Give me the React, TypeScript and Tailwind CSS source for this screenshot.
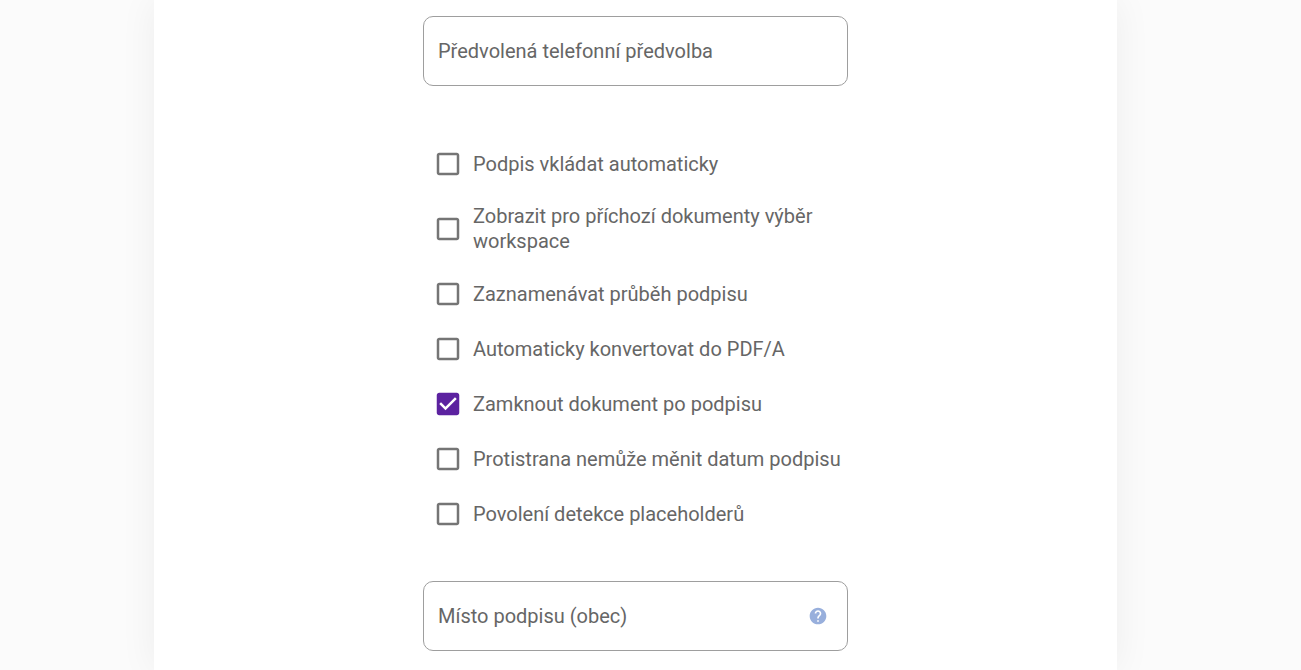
import { useId, useState } from "react";

type Option = { label: string; checked: boolean };

const options: Option[] = [
  { label: "Podpis vkládat automaticky", checked: false },
  { label: "Zobrazit pro příchozí dokumenty výběr workspace", checked: false },
  { label: "Zaznamenávat průběh podpisu", checked: false },
  { label: "Automaticky konvertovat do PDF/A", checked: false },
  { label: "Zamknout dokument po podpisu", checked: true },
  { label: "Protistrana nemůže měnit datum podpisu", checked: false },
  { label: "Povolení detekce placeholderů", checked: false },
];

// Outlined text field. The label rests inside the box while the field is empty
// and moves up onto the border once it is focused or filled.
function TextField({ label, help }: { label: string; help?: boolean }) {
  const id = useId();

  return (
    <div className="relative flex h-[70px] items-center rounded-[10px] border border-[#9e9e9e] pr-[19px] pl-3.5">
      <input
        id={id}
        type="text"
        placeholder=" "
        className="peer h-full min-w-0 flex-1 bg-transparent text-xl text-[#666666] outline-none"
      />
      <label
        htmlFor={id}
        className="pointer-events-none absolute -top-3 left-3.5 bg-white text-sm text-[#666666] peer-placeholder-shown:top-5 peer-placeholder-shown:text-xl peer-focus:-top-3 peer-focus:text-sm"
      >
        {label}
      </label>
      {help && (
        <button type="button" aria-label="Nápověda" className="shrink-0">
          <svg viewBox="0 0 24 24" className="size-5 fill-[#98afdc]">
            <path d="M12 2C6.48 2 2 6.48 2 12s4.48 10 10 10 10-4.48 10-10S17.52 2 12 2zm1 17h-2v-2h2v2zm2.07-7.75l-.9.92C13.45 12.9 13 13.5 13 15h-2v-.5c0-1.1.45-2.1 1.17-2.83l1.24-1.26c.37-.36.59-.86.59-1.41 0-1.1-.9-2-2-2s-2 .9-2 2H8c0-2.21 1.79-4 4-4s4 1.79 4 4c0 .88-.36 1.68-.93 2.25z" />
          </svg>
        </button>
      )}
    </div>
  );
}

function CheckboxRow({ label, checked: initial }: Option) {
  const [checked, setChecked] = useState(initial);

  return (
    <label className="flex min-h-[55px] items-center pt-[13px] pb-3 pl-2.5">
      <input
        type="checkbox"
        checked={checked}
        onChange={(event) => setChecked(event.target.checked)}
        className="sr-only"
      />
      <svg viewBox="0 0 24 24" className="size-[30px] shrink-0" aria-hidden="true">
        {checked ? (
          <path
            className="fill-[#5c22a0]"
            d="M19 3H5c-1.11 0-2 .9-2 2v14c0 1.1.89 2 2 2h14c1.11 0 2-.9 2-2V5c0-1.1-.89-2-2-2zm-9 14l-5-5 1.41-1.41L10 14.17l7.59-7.59L19 8l-9 9z"
          />
        ) : (
          <path
            className="fill-[#757575]"
            d="M19 5v14H5V5h14m0-2H5c-1.1 0-2 .9-2 2v14c0 1.1.9 2 2 2h14c1.1 0 2-.9 2-2V5c0-1.1-.9-2-2-2z"
          />
        )}
      </svg>
      <span className="ml-2.5 text-xl leading-[25px] text-[#666666]">{label}</span>
    </label>
  );
}

export default function App() {
  return (
    <div className="min-h-screen bg-[#fbfbfb] pr-[184px] pl-[154px] font-[Roboto,sans-serif]">
      <main className="min-h-screen bg-white pt-4 pb-5 shadow-[0_0_36px_rgba(0,40,30,0.06)]">
        <form className="mx-auto max-w-[425px]">
          <TextField label="Předvolená telefonní předvolba" />
          <div className="mt-[50px] mb-10">
            {options.map((option) => (
              <CheckboxRow key={option.label} {...option} />
            ))}
          </div>
          <TextField label="Místo podpisu (obec)" help />
        </form>
      </main>
    </div>
  );
}
